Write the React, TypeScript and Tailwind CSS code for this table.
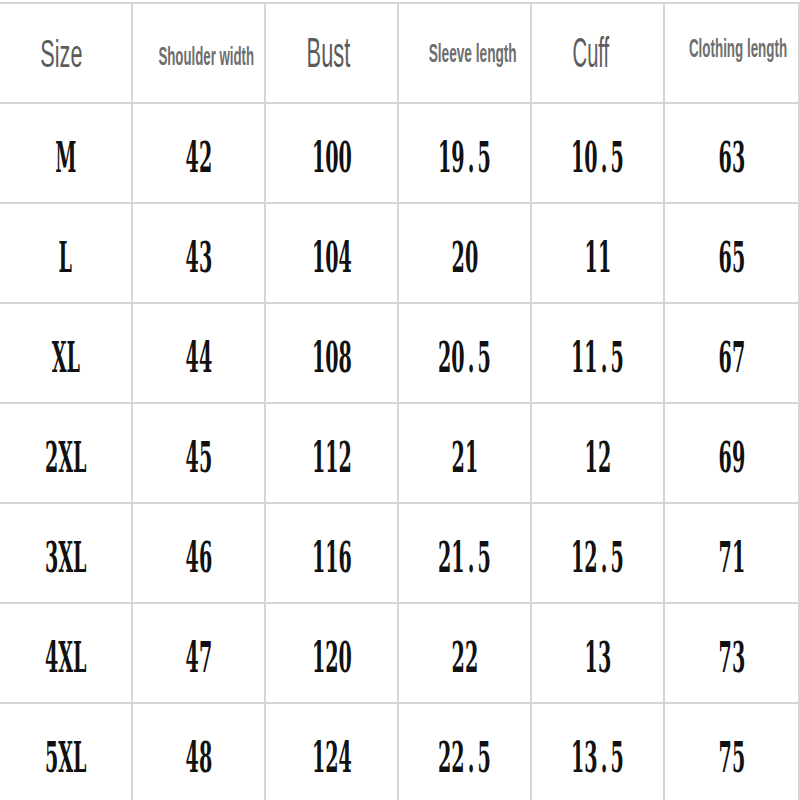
const headers = [
  { label: 'Size', cls: 'text-[38px] scale-x-[0.57] pr-[16px] pt-[2px] text-[#5c5c5c]' },
  { label: 'Shoulder width', cls: 'text-[25px] font-bold scale-x-[0.53] pl-[30px] pt-[6px] text-[#6e6e6e]' },
  { label: 'Bust', cls: 'text-[42px] scale-x-[0.52] pr-[10px] text-[#5c5c5c]' },
  { label: 'Sleeve length', cls: 'text-[26px] font-bold scale-x-[0.525] pl-[30px] text-[#6e6e6e]' },
  { label: 'Cuff', cls: 'text-[42px] scale-x-[0.48] pr-[26px] text-[#5c5c5c]' },
  { label: 'Clothing length', cls: 'text-[26px] font-bold scale-x-[0.515] pl-[26px] pb-[10px] text-[#6e6e6e]' },
]

const rows = [
  ['M', '42', '100', '19.5', '10.5', '63'],
  ['L', '43', '104', '20', '11', '65'],
  ['XL', '44', '108', '20.5', '11.5', '67'],
  ['2XL', '45', '112', '21', '12', '69'],
  ['3XL', '46', '116', '21.5', '12.5', '71'],
  ['4XL', '47', '120', '22', '13', '73'],
  ['5XL', '48', '124', '22.5', '13.5', '75'],
]

function Value({ text }: { text: string }) {
  const [a, b] = text.split('.')
  return (
    <span className="inline-block scale-x-[0.445] text-[43px] font-bold leading-none text-[#111] whitespace-nowrap">
      {a}
      {b !== undefined && (
        <>
          <span className="px-[7px]">.</span>
          {b}
        </>
      )}
    </span>
  )
}

export default function App() {
  return (
    <div className="w-[800px] h-[800px] overflow-hidden bg-white">
      <div
        className="mt-[2px] grid grid-cols-[133px_133px_133px_133px_133px_135px] border-t-2 border-[#d6d6d6]"
        style={{ fontFamily: '"DejaVu Serif", serif' }}
      >
        {headers.map((h) => (
          <div
            key={h.label}
            className="h-[100px] border-r-2 border-b-2 border-[#d6d6d6] flex items-center justify-center"
          >
            <span
              className={`inline-block leading-none whitespace-nowrap ${h.cls}`}
              style={{ fontFamily: '"Liberation Sans", Arial, sans-serif' }}
            >
              {h.label}
            </span>
          </div>
        ))}
        {rows.map((row) =>
          row.map((cell, i) => (
            <div
              key={row[0] + i}
              className="h-[100px] border-r-2 border-b-2 border-[#d6d6d6] flex items-center justify-center pt-[8px]"
            >
              <Value text={cell} />
            </div>
          ))
        )}
      </div>
    </div>
  )
}
